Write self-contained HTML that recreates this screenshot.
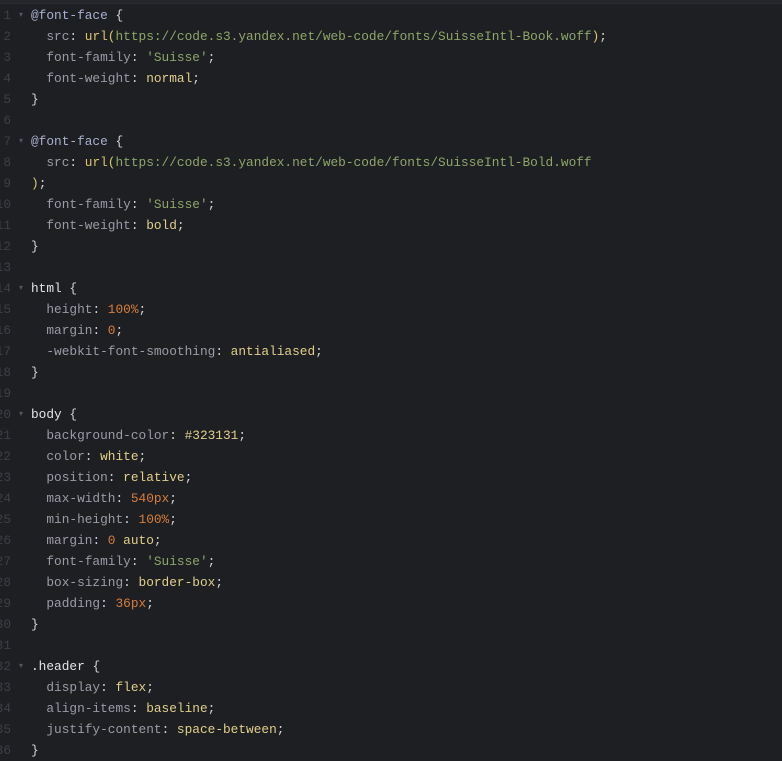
<!DOCTYPE html>
<html><head><meta charset="utf-8"><style>
html,body{margin:0;padding:0;background:#1e1f23;width:782px;height:757px;overflow:hidden}
.top{position:absolute;left:0;top:0;width:782px;height:3px;background:#25262b;border-bottom:1px solid #2b2c31}
.ed{position:absolute;top:5px;left:0;font-family:"Liberation Mono",monospace;font-size:12.8px;line-height:21px;color:#d4d4d4}
.l{height:21px;position:relative;white-space:pre}
.n{position:absolute;left:-20px;width:31px;text-align:right;color:#3e3f45}
.f{position:absolute;left:19px;color:#55565c;font-size:8px}
.c{position:absolute;left:31px}
.p{color:#9d9aa8}.s{color:#8da66a}.k{color:#e1cf8a}.u{color:#d9c56c}.o{color:#d77e3c}.a{color:#a7b0cf}.w{color:#e4e4e4}
</style></head><body><div class="top"></div><div class="ed"><div class="l"><span class="n">1</span><span class="f">▾</span><span class="c"><span class="a">@font-face</span> {</span></div><div class="l"><span class="n">2</span><span class="c">  <span class="p">src</span>: <span class="u">url(</span><span class="s">https://code.s3.yandex.net/web-code/fonts/SuisseIntl-Book.woff</span><span class="u">)</span>;</span></div><div class="l"><span class="n">3</span><span class="c">  <span class="p">font-family</span>: <span class="s">'Suisse'</span>;</span></div><div class="l"><span class="n">4</span><span class="c">  <span class="p">font-weight</span>: <span class="k">normal</span>;</span></div><div class="l"><span class="n">5</span><span class="c">}</span></div><div class="l"><span class="n">6</span></div><div class="l"><span class="n">7</span><span class="f">▾</span><span class="c"><span class="a">@font-face</span> {</span></div><div class="l"><span class="n">8</span><span class="c">  <span class="p">src</span>: <span class="u">url(</span><span class="s">https://code.s3.yandex.net/web-code/fonts/SuisseIntl-Bold.woff</span></span></div><div class="l"><span class="n">9</span><span class="c"><span class="u">)</span>;</span></div><div class="l"><span class="n">10</span><span class="c">  <span class="p">font-family</span>: <span class="s">'Suisse'</span>;</span></div><div class="l"><span class="n">11</span><span class="c">  <span class="p">font-weight</span>: <span class="k">bold</span>;</span></div><div class="l"><span class="n">12</span><span class="c">}</span></div><div class="l"><span class="n">13</span></div><div class="l"><span class="n">14</span><span class="f">▾</span><span class="c"><span class="w">html</span> {</span></div><div class="l"><span class="n">15</span><span class="c">  <span class="p">height</span>: <span class="o">100%</span>;</span></div><div class="l"><span class="n">16</span><span class="c">  <span class="p">margin</span>: <span class="o">0</span>;</span></div><div class="l"><span class="n">17</span><span class="c">  <span class="p">-webkit-font-smoothing</span>: <span class="k">antialiased</span>;</span></div><div class="l"><span class="n">18</span><span class="c">}</span></div><div class="l"><span class="n">19</span></div><div class="l"><span class="n">20</span><span class="f">▾</span><span class="c"><span class="w">body</span> {</span></div><div class="l"><span class="n">21</span><span class="c">  <span class="p">background-color</span>: <span class="k">#323131</span>;</span></div><div class="l"><span class="n">22</span><span class="c">  <span class="p">color</span>: <span class="k">white</span>;</span></div><div class="l"><span class="n">23</span><span class="c">  <span class="p">position</span>: <span class="k">relative</span>;</span></div><div class="l"><span class="n">24</span><span class="c">  <span class="p">max-width</span>: <span class="o">540px</span>;</span></div><div class="l"><span class="n">25</span><span class="c">  <span class="p">min-height</span>: <span class="o">100%</span>;</span></div><div class="l"><span class="n">26</span><span class="c">  <span class="p">margin</span>: <span class="o">0</span> <span class="k">auto</span>;</span></div><div class="l"><span class="n">27</span><span class="c">  <span class="p">font-family</span>: <span class="s">'Suisse'</span>;</span></div><div class="l"><span class="n">28</span><span class="c">  <span class="p">box-sizing</span>: <span class="k">border-box</span>;</span></div><div class="l"><span class="n">29</span><span class="c">  <span class="p">padding</span>: <span class="o">36px</span>;</span></div><div class="l"><span class="n">30</span><span class="c">}</span></div><div class="l"><span class="n">31</span></div><div class="l"><span class="n">32</span><span class="f">▾</span><span class="c"><span class="w">.header</span> {</span></div><div class="l"><span class="n">33</span><span class="c">  <span class="p">display</span>: <span class="k">flex</span>;</span></div><div class="l"><span class="n">34</span><span class="c">  <span class="p">align-items</span>: <span class="k">baseline</span>;</span></div><div class="l"><span class="n">35</span><span class="c">  <span class="p">justify-content</span>: <span class="k">space-between</span>;</span></div><div class="l"><span class="n">36</span><span class="c">}</span></div></div></body></html>
